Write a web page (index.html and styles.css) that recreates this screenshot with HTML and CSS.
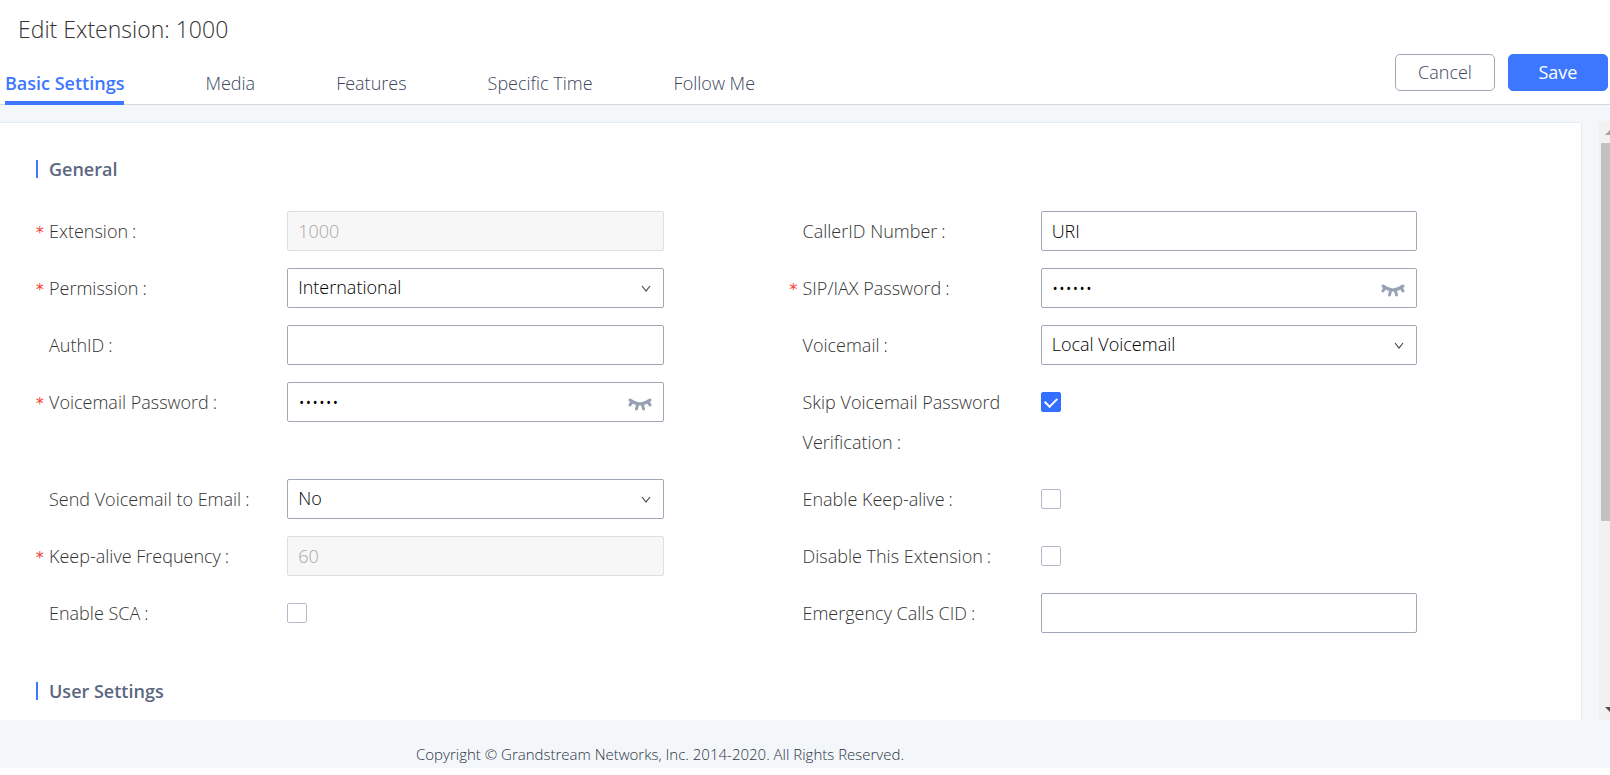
FILE: index.html
```html
<!DOCTYPE html>
<html lang="en">
<head>
  <meta charset="UTF-8">
  <title>Edit Extension: 1000</title>
  <link rel="stylesheet" href="styles.css">
</head>
<body>

  <!-- Shared icons -->
  <svg class="sprite" aria-hidden="true">
    <symbol id="eye-closed" viewBox="0 0 24 14">
      <path d="M2 3Q12 11 22 3M4 4.500L2 8M20 4.500L22 8M9.500 8L8.500 12M14.500 8l1 4" fill="none" stroke="currentColor" stroke-width="3" stroke-linecap="round"/>
    </symbol>
    <symbol id="arrow" viewBox="0 0 10 8">
      <path d="M1 1l4 5 4-5" fill="none" stroke="currentColor" stroke-width="1.200"/>
    </symbol>
  </svg>

  <header class="header">
    <h1>Edit Extension: 1000</h1>
    <div class="bar">
      <nav class="tabs">
        <a href="#basic" class="tab active">Basic Settings</a>
        <a href="#media" class="tab">Media</a>
        <a href="#features" class="tab">Features</a>
        <a href="#time" class="tab">Specific Time</a>
        <a href="#follow" class="tab">Follow Me</a>
      </nav>
      <div class="actions">
        <button type="button" class="btn">Cancel</button>
        <button type="submit" form="extension-form" class="btn primary">Save</button>
      </div>
    </div>
  </header>

  <main class="content">
    <form class="panel" id="extension-form">
      <h2>General</h2>

      <div class="fields">
        <div class="field">
          <label for="extension" class="required">Extension</label>
          <input type="text" id="extension" class="control" value="1000" disabled>
        </div>
        <div class="field">
          <label for="callerid">CallerID Number</label>
          <input type="text" id="callerid" class="control" value="URI">
        </div>

        <div class="field">
          <label for="permission" class="required">Permission</label>
          <div class="wrap">
            <select id="permission" class="control">
              <option>International</option>
            </select>
            <svg class="arrow"><use href="#arrow"/></svg>
          </div>
        </div>
        <div class="field">
          <label for="sip-password" class="required">SIP/IAX Password</label>
          <div class="wrap">
            <input type="password" id="sip-password" class="control" value="secret">
            <svg class="eye"><use href="#eye-closed"/></svg>
          </div>
        </div>

        <div class="field">
          <label for="authid">AuthID</label>
          <input type="text" id="authid" class="control">
        </div>
        <div class="field">
          <label for="voicemail">Voicemail</label>
          <div class="wrap">
            <select id="voicemail" class="control">
              <option>Local Voicemail</option>
            </select>
            <svg class="arrow"><use href="#arrow"/></svg>
          </div>
        </div>

        <div class="field">
          <label for="vm-password" class="required">Voicemail Password</label>
          <div class="wrap">
            <input type="password" id="vm-password" class="control" value="secret">
            <svg class="eye"><use href="#eye-closed"/></svg>
          </div>
        </div>
        <div class="field">
          <label for="skip-password">Skip Voicemail Password Verification</label>
          <input type="checkbox" id="skip-password" class="check" checked>
        </div>

        <div class="field">
          <label for="vm-email">Send Voicemail to Email</label>
          <div class="wrap">
            <select id="vm-email" class="control">
              <option>No</option>
            </select>
            <svg class="arrow"><use href="#arrow"/></svg>
          </div>
        </div>
        <div class="field">
          <label for="keepalive">Enable Keep-alive</label>
          <input type="checkbox" id="keepalive" class="check">
        </div>

        <div class="field">
          <label for="frequency" class="required">Keep-alive Frequency</label>
          <input type="text" id="frequency" class="control" value="60" disabled>
        </div>
        <div class="field">
          <label for="disable">Disable This Extension</label>
          <input type="checkbox" id="disable" class="check">
        </div>

        <div class="field">
          <label for="sca">Enable SCA</label>
          <input type="checkbox" id="sca" class="check">
        </div>
        <div class="field">
          <label for="emergency">Emergency Calls CID</label>
          <input type="text" id="emergency" class="control">
        </div>
      </div>

      <h2>User Settings</h2>
    </form>

    <div class="scrollbar" aria-hidden="true">
      <span class="up"></span>
      <div class="track"><div class="thumb"></div></div>
      <span class="down"></span>
    </div>
  </main>

  <footer class="footer">Copyright © Grandstream Networks, Inc. 2014-2020. All Rights Reserved.</footer>

</body>
</html>
```
FILE: styles.css
```css
* {
  box-sizing: border-box;
}

body {
  margin: 0;
  height: 100vh;
  padding-bottom: 7px;
  display: flex;
  flex-direction: column;
  overflow: hidden;
  background-color: white;
  font-family: "Open Sans", sans-serif;
  font-size: 18px;
  font-weight: 300;
  color: #333;
}

.sprite {
  display: none;
}

/* Header */
.header {
  border-bottom: 1px solid #d5d8dc;
}

h1 {
  margin: 0;
  padding: 9px 18px 1px;
  font-size: 23px;
  font-weight: 300;
  line-height: 40px;
}

.bar {
  display: flex;
  justify-content: space-between;
  height: 54px;
  padding: 0 2px 0 5px;
}

.tabs {
  display: flex;
  gap: 81px;
}

.tab {
  height: 55px;
  padding-top: 18px;
  line-height: 30px;
  color: #3c465e;
  text-decoration: none;
}

.tab.active {
  border-bottom: 4px solid #3d77ff;
  font-weight: 600;
  color: #3d77ff;
}

.actions {
  display: flex;
  gap: 13px;
  padding-top: 4px;
}

.btn {
  width: 100px;
  height: 37px;
  padding: 0 6px 2px;
  border: 1px solid #a0a8b8;
  border-radius: 5px;
  background-color: white;
  font: inherit;
  color: #3c465e;
  cursor: pointer;
}

.btn.primary {
  border-color: #3d77ff;
  background-color: #3d77ff;
  font-weight: 400;
  color: white;
}

/* Form panel */
.content {
  flex: 1;
  min-height: 0;
  display: flex;
  gap: 17px;
  padding-top: 17px;
  background-color: #f3f7fa;
}

.panel {
  flex: 1;
  overflow: hidden;
  padding: 31px 38px 0 36px;
  border: 1px solid #e8ebef;
  border-width: 1px 1px 0 0;
  background-color: white;
}

h2 {
  display: flex;
  align-items: center;
  gap: 11px;
  margin: 0;
  font-size: 18px;
  font-weight: 600;
  line-height: 30px;
  color: #5c6780;
}

h2::before {
  content: "";
  width: 2px;
  height: 18px;
  background-color: #3d77ff;
}

.fields {
  display: grid;
  grid-template-columns: 1fr 1fr;
  row-gap: 17px;
  padding: 27px 0 43px;
}

.field {
  display: grid;
  grid-template-columns: 4fr 6fr 2fr;
  align-items: start;
}

label {
  position: relative;
  padding: 0 20px 0 13px;
  line-height: 40px;
}

label::after {
  content: ":";
  margin-left: 4px;
}

.required::before {
  content: "*";
  position: absolute;
  left: -1px;
  font-family: "DejaVu Sans Mono", monospace;
  font-size: 16px;
  line-height: 44px;
  color: #f04134;
}

.wrap {
  position: relative;
}

.control {
  display: block;
  width: 100%;
  height: 40px;
  padding: 0 10px;
  border: 1px solid #a0a8b5;
  border-radius: 2px;
  background-color: white;
  font: inherit;
  color: black;
  appearance: none;
}

select.control {
  padding-bottom: 2px;
}

.control:disabled {
  border-color: #dfdfdf;
  background-color: #f7f7f7;
  color: #a8a8a8;
  opacity: 1;
}

.arrow {
  position: absolute;
  right: 13px;
  top: 17px;
  width: 10px;
  height: 8px;
  color: #4a4a4a;
  pointer-events: none;
}

.eye {
  position: absolute;
  right: 12px;
  top: 15px;
  width: 24px;
  height: 14px;
  color: #98a1b3;
}

.check {
  width: 20px;
  height: 20px;
  margin: 10px 0;
  border: 1px solid #b4bacb;
  border-radius: 2px;
  background-color: white;
  appearance: none;
}

.check:checked {
  display: grid;
  place-items: center;
  border-color: #3370ff;
  background-color: #3370ff;
}

.check:checked::before {
  content: "";
  width: 6px;
  height: 10px;
  margin-bottom: 3px;
  border: solid white;
  border-width: 0 2px 2px 0;
  transform: rotate(45deg);
}

/* Scrollbar, cut by the window edge */
.scrollbar {
  display: flex;
  flex-direction: column;
  width: 11px;
  overflow: hidden;
  background-color: #f1f1f1;
}

.track {
  flex: 1;
  padding-left: 2px;
}

.thumb {
  width: 15px;
  height: 68%;
  background-color: #c1c1c1;
}

.up,
.down {
  width: 10px;
  margin: 8px 0 8px 6px;
  border: 5px solid transparent;
}

.up {
  border-top: 0;
  border-bottom-color: #a3a3a3;
}

.down {
  border-bottom: 0;
  border-top-color: #505050;
}

/* Footer */
.footer {
  padding: 20px 290px 0 0;
  background-color: #f3f7fa;
  font-size: 15px;
  line-height: 28px;
  text-align: center;
  color: #2c3444;
}
```
